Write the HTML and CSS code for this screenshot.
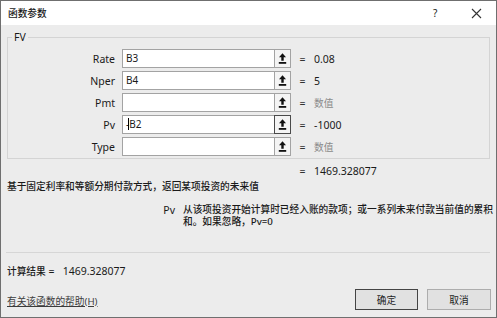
FILE: index.html
```html
<!DOCTYPE html>
<html lang="zh-CN">
<head>
    <meta charset="UTF-8">
    <title>函数参数</title>
    <link rel="stylesheet" href="styles.css">
</head>
<body>
    <div class="window">
        <div class="titlebar">
            <span class="title">函数参数</span>
            <span class="help">?</span>
            <span class="close">
                <svg width="11" height="11" viewBox="0 0 11 11"><path d="M1 1 L10 10 M10 1 L1 10" stroke="#333" stroke-width="1.1" fill="none"/></svg>
            </span>
        </div>
        <div class="content">
            <fieldset class="group">
                <legend>FV</legend>
                <div class="row">
                    <label>Rate</label>
                    <div class="field">B3</div>
                    <button class="ref"><svg width="9" height="11" viewBox="0 0 9 11"><path d="M4.5 0.3 L1 4.3 H3.3 V7.8 H5.7 V4.3 H8 Z" fill="#111"/><rect x="0.8" y="9" width="7.4" height="1.8" fill="#111"/></svg></button>
                    <span class="eq">=</span>
                    <span class="val">0.08</span>
                </div>
                <div class="row">
                    <label>Nper</label>
                    <div class="field">B4</div>
                    <button class="ref"><svg width="9" height="11" viewBox="0 0 9 11"><path d="M4.5 0.3 L1 4.3 H3.3 V7.8 H5.7 V4.3 H8 Z" fill="#111"/><rect x="0.8" y="9" width="7.4" height="1.8" fill="#111"/></svg></button>
                    <span class="eq">=</span>
                    <span class="val">5</span>
                </div>
                <div class="row">
                    <label>Pmt</label>
                    <div class="field"></div>
                    <button class="ref"><svg width="9" height="11" viewBox="0 0 9 11"><path d="M4.5 0.3 L1 4.3 H3.3 V7.8 H5.7 V4.3 H8 Z" fill="#111"/><rect x="0.8" y="9" width="7.4" height="1.8" fill="#111"/></svg></button>
                    <span class="eq">=</span>
                    <span class="val hint">数值</span>
                </div>
                <div class="row">
                    <label>Pv</label>
                    <div class="field">-<span class="caret"></span>B2</div>
                    <button class="ref active"><svg width="9" height="11" viewBox="0 0 9 11"><path d="M4.5 0.3 L1 4.3 H3.3 V7.8 H5.7 V4.3 H8 Z" fill="#111"/><rect x="0.8" y="9" width="7.4" height="1.8" fill="#111"/></svg></button>
                    <span class="eq">=</span>
                    <span class="val">-1000</span>
                </div>
                <div class="row">
                    <label>Type</label>
                    <div class="field"></div>
                    <button class="ref"><svg width="9" height="11" viewBox="0 0 9 11"><path d="M4.5 0.3 L1 4.3 H3.3 V7.8 H5.7 V4.3 H8 Z" fill="#111"/><rect x="0.8" y="9" width="7.4" height="1.8" fill="#111"/></svg></button>
                    <span class="eq">=</span>
                    <span class="val hint">数值</span>
                </div>
            </fieldset>

            <div class="row result">
                <span></span>
                <span></span>
                <span></span>
                <span class="eq">=</span>
                <span class="val">1469.328077</span>
            </div>

            <p class="desc">基于固定利率和等额分期付款方式，返回某项投资的未来值</p>

            <div class="argdesc">
                <span class="argname">Pv</span>
                <p>从该项投资开始计算时已经入账的款项；或一系列未来付款当前值的累积和。如果忽略，Pv=0</p>
            </div>

            <div class="separator"></div>

            <div class="calc"><span class="zh">计算结果</span> =&nbsp;&nbsp; 1469.328077</div>

            <div class="footer">
                <a class="helplink" href="#">有关该函数的帮助(H)</a>
                <div class="buttons">
                    <button class="btn default">确定</button>
                    <button class="btn">取消</button>
                </div>
            </div>
        </div>
    </div>
</body>
</html>
```

FILE: styles.css
```css
* {
    margin: 0;
    padding: 0;
    box-sizing: border-box;
}

body {
    font-family: "Noto Sans", "Noto Sans CJK SC", sans-serif;
    font-size: 10.5px;
    color: #1a1a1a;
    background: #ffffff;
}

.window {
    width: 497px;
    height: 318px;
    border: 1px solid #6f6f6f;
    background: #ececec;
    overflow: hidden;
}

.titlebar {
    height: 24px;
    background: #ffffff;
    display: flex;
    align-items: center;
    padding-left: 7px;
}

.title {
    font-size: 9.7px;
    font-weight: 500;
    flex: 1;
}

.help {
    font-size: 10px;
    width: 14px;
    margin-right: 24px;
}

.close {
    display: flex;
    margin-right: 14px;
}

.content {
    padding: 0 6px;
}

.group {
    margin-top: 6px;
    border: 1px solid #d4d4d4;
    padding: 6px 0 2px 0;
}

.group legend {
    margin-left: 4px;
    padding: 0 2px;
    line-height: 12px;
    font-size: 10.5px;
}

.row {
    display: grid;
    grid-template-columns: 114px 152px 17px 23px 1fr;
    align-items: center;
    height: 19px;
    margin-bottom: 3px;
}

.row:last-child {
    margin-bottom: 0;
}

.row label {
    text-align: right;
    padding-right: 7px;
}

.field {
    height: 19px;
    background: #ffffff;
    border: 1px solid #a3a3a3;
    border-right: none;
    padding: 0 3px;
    line-height: 17px;
    font-size: 10px;
    white-space: nowrap;
}

.caret {
    display: inline-block;
    width: 1px;
    height: 12px;
    background: #000;
    margin-left: -1px;
    vertical-align: -2px;
}

.ref {
    height: 19px;
    width: 17px;
    border: 1px solid #a3a3a3;
    background: #f4f4f4;
    display: flex;
    align-items: center;
    justify-content: center;
}

.ref.active {
    border-color: #4a4a4a;
}

.eq {
    text-align: center;
    color: #333;
}

.hint {
    color: #8a8a8a;
    font-size: 9.7px;
}

.result {
    margin-top: 5px;
    margin-bottom: 0;
    height: 14px;
    padding-left: 1px;
}

.desc {
    margin-top: 2px;
    font-size: 9.7px;
    font-weight: 500;
    line-height: 14px;
}

.argdesc {
    display: flex;
    margin-top: 10px;
    line-height: 12px;
}

.argname {
    width: 176px;
    text-align: right;
    padding-right: 8px;
    flex-shrink: 0;
}

.argdesc p {
    width: 324px;
    font-size: 9.7px;
    font-weight: 500;
    flex-shrink: 0;
}

.separator {
    height: 1px;
    background: #d6d6d6;
    margin-top: 24px;
    margin-left: -1px;
}

.calc {
    margin-top: 11px;
    line-height: 14px;
}

.zh {
    font-size: 9.7px;
    font-weight: 500;
}

.footer {
    display: flex;
    justify-content: space-between;
    align-items: center;
    margin-top: 10px;
}

.helplink {
    color: #3c3c3c;
    font-size: 9.7px;
    margin-top: 3px;
}

.buttons {
    display: flex;
    gap: 9px;
    margin-right: -1px;
}

.btn {
    width: 63px;
    height: 21px;
    background: #e1e1e1;
    border: 1px solid #adadad;
    font-family: "Noto Sans CJK SC", sans-serif;
    font-size: 9.7px;
    color: #1e1e1e;
}

.btn + .btn {
    width: 64px;
}

.btn.default {
    border: 1px solid #444;
}
```
